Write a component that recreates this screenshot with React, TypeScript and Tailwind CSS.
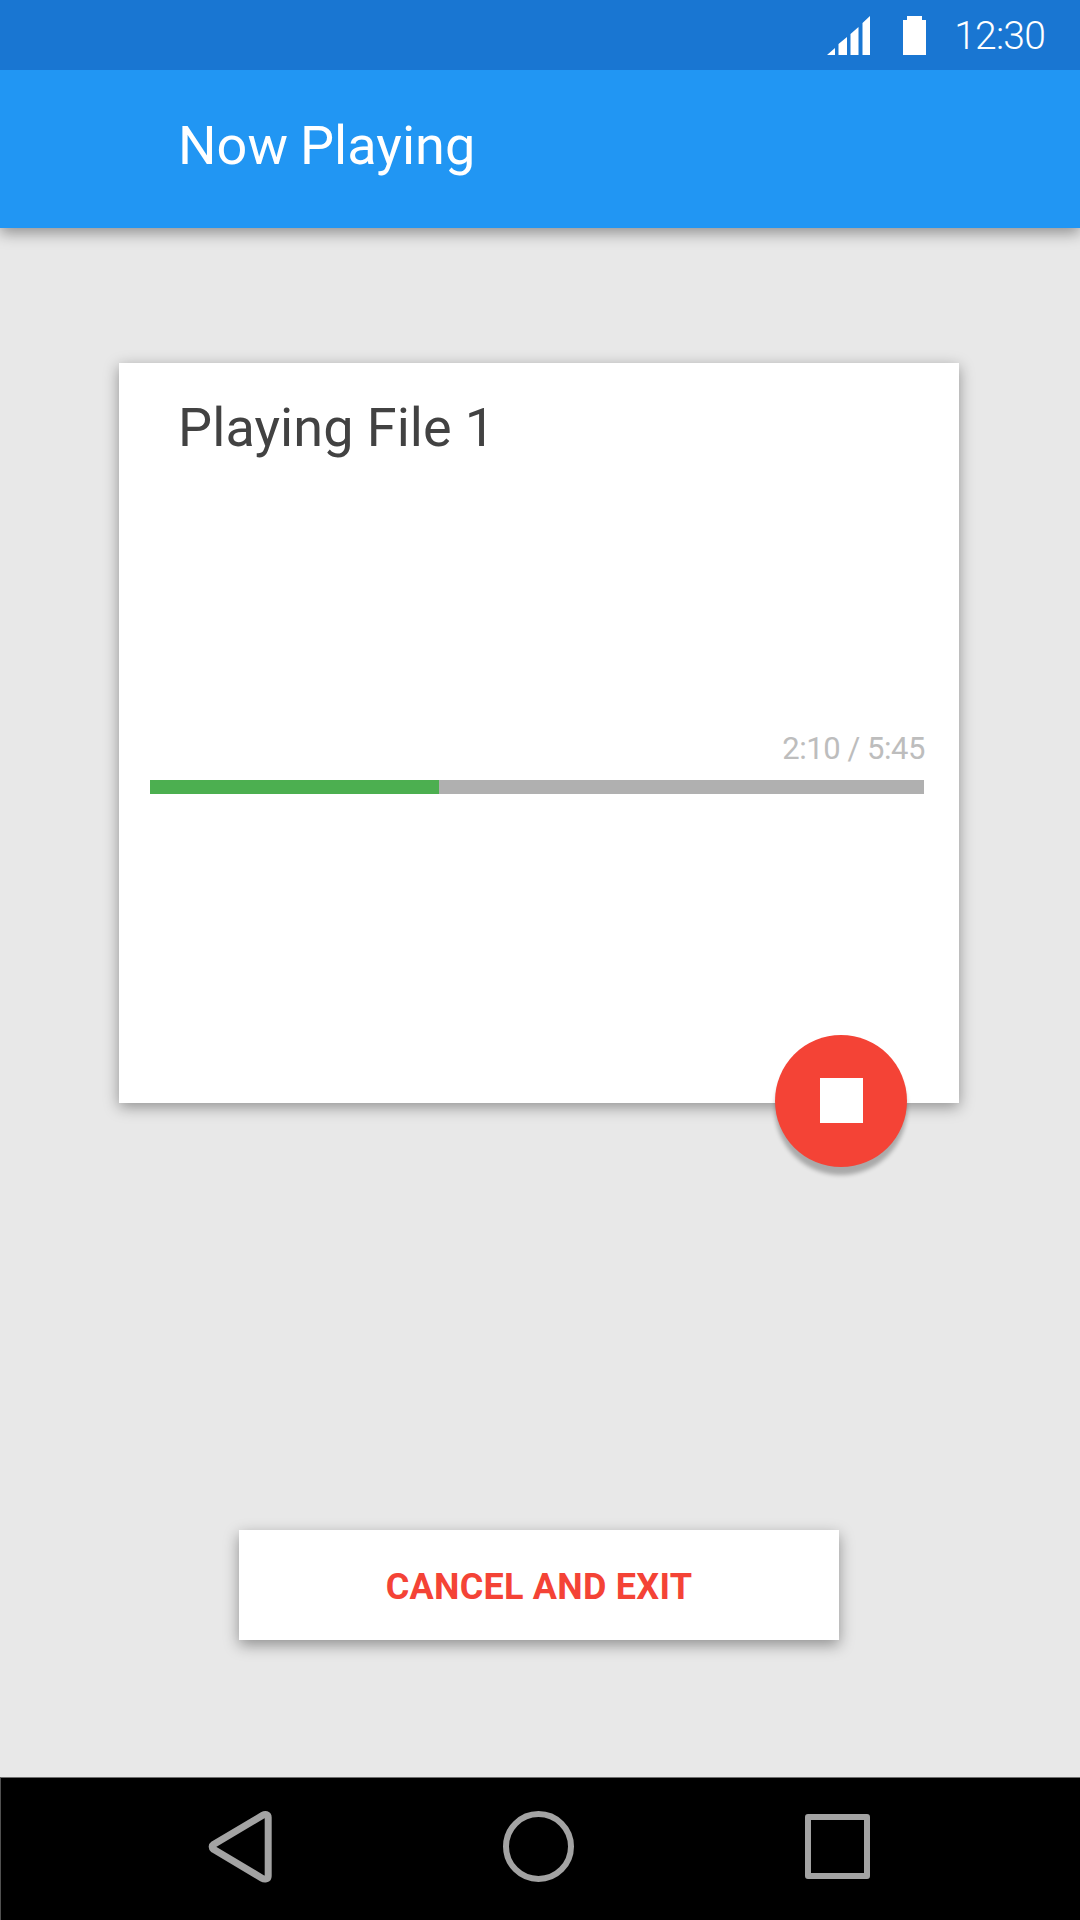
import React from "react";

const elapsed = 289;
const total = 774;

function StatusBar() {
  return (
    <div className="relative z-10 flex h-[70px] items-start justify-end bg-[#1976d2] pr-[35px] text-white">
      <svg className="mt-4 h-[39px] w-[43px]" viewBox="0 0 43 39" fill="currentColor">
        <path d="M0 39L8 32V39ZM11.5 39V28L20 21V39ZM23.5 39V18L31.5 11V39ZM35.5 39V7L43 0V39Z" />
      </svg>
      <svg className="mt-4 ml-[33px] h-[39px] w-[23px]" viewBox="0 0 23 39" fill="currentColor">
        <path d="M4 0H19V4H23V39H0V4H4Z" />
      </svg>
      <span className="mt-[13px] ml-[28px] flex w-[91px] justify-end text-[39px] leading-[47px] font-light tracking-[-0.8px] whitespace-nowrap">
        12:30
      </span>
    </div>
  );
}

function AppBar() {
  return (
    <header className="relative flex h-[158px] items-start bg-[#2196f3] pl-[178px] shadow-[0_5px_14px_rgba(0,0,0,0.38)]">
      <h1 className="mt-[44px] text-[54px] leading-[64px] tracking-[0.05px] [word-spacing:-1.5px] text-white">Now Playing</h1>
    </header>
  );
}

function PlayerCard() {
  return (
    <section className="relative ml-[119px] mt-[135px] flex h-[740px] w-[840px] flex-col bg-white shadow-[0_4px_14px_rgba(0,0,0,0.38)]">
      <h2 className="mt-[33px] ml-[59px] text-[54px] leading-[64px] tracking-[0.1px] [word-spacing:-0.5px] text-[#424242]">Playing File 1</h2>
      <div className="mt-[271px] mr-[34px] ml-[31px] flex h-[49px] justify-end text-[31px] leading-[36px] tracking-[-0.45px] text-[#bdbdbd]">
        <span>2:10 / 5:45</span>
      </div>
      <div className="mr-[35px] ml-[31px] h-[14px] bg-[#b0b0b0]">
        <div className="h-full bg-[#4caf50]" style={{ width: `${(elapsed / total) * 100}%` }} />
      </div>
      <button
        aria-label="Stop"
        className="absolute top-[672px] left-[656px] flex size-[132px] items-start rounded-full bg-[#f44336] pt-[43px] pl-[45px] shadow-[0_8px_4px_rgba(0,0,0,0.27)]"
      >
        <span className="h-[45px] w-[43px] bg-white" />
      </button>
    </section>
  );
}

function NavBar() {
  return (
    <nav className="mt-auto flex h-[143px] items-start border-t border-l border-t-[#707070] border-l-[#505050] bg-black text-[#a3a3a3]">
      <svg className="mt-[32px] ml-[207px] h-[73px] w-[65px]" viewBox="0 0 65 73" fill="none" stroke="currentColor" strokeWidth="7" strokeLinejoin="round">
        <path d="M5.5 34.5C3.7 35.7 3.7 38 5.5 39.3L54 68.2C56.5 69.7 60.2 69.4 60.2 66V7.5C60.2 4.2 57.2 3.8 54.7 5.3Z" />
      </svg>
      <svg className="mt-[33px] ml-[230px] size-[71px]" viewBox="0 0 71 71" fill="none" stroke="currentColor" strokeWidth="6">
        <circle cx="35.5" cy="35.5" r="32.5" />
      </svg>
      <svg className="mt-[36px] ml-[231px] size-[65px]" viewBox="0 0 65 65" fill="none" stroke="currentColor" strokeWidth="6" strokeLinejoin="round">
        <rect x="3" y="3" width="59" height="59" />
      </svg>
    </nav>
  );
}

export default function App() {
  return (
    <main className="flex h-[1920px] w-[1080px] flex-col overflow-hidden bg-[#e8e8e8] font-['Roboto',sans-serif]">
      <StatusBar />
      <AppBar />
      <PlayerCard />
      <button className="mt-[427px] ml-[239px] flex h-[110px] w-[600px] items-start justify-center bg-white pt-[36px] text-[36px] leading-[42px] font-bold tracking-[0.25px] text-[#f44336] shadow-[0_5px_14px_rgba(0,0,0,0.38)]">
        CANCEL AND EXIT
      </button>
      <NavBar />
    </main>
  );
}
